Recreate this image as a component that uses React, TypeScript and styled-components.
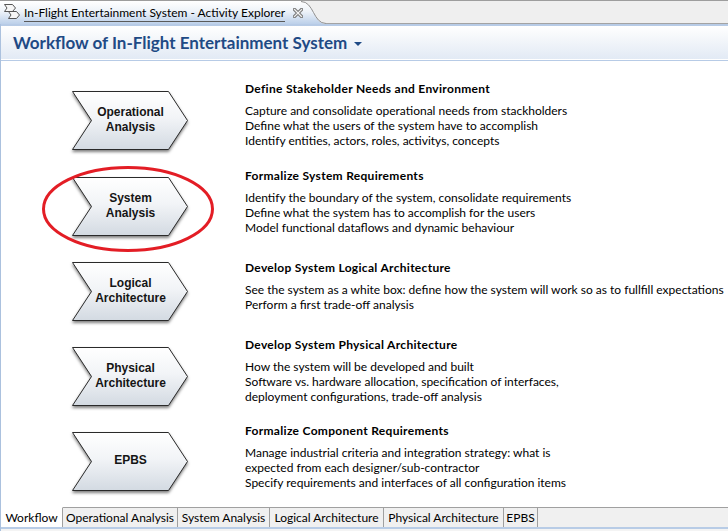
import React from "react";
import styled, { createGlobalStyle } from "styled-components";

const UI = `Lato, "Noto Sans", "DejaVu Sans", sans-serif`;

const Global = createGlobalStyle`
  html, body { margin: 0; padding: 0; background: #fff; }
  body { width: 728px; height: 531px; overflow: hidden; font-family: ${UI}; color: #000; }
`;

const Window = styled.div`
  width: 728px;
  height: 531px;
  display: flex;
  flex-direction: column;
  overflow: hidden;
  background: #fff;
`;

/* ---------- top editor tab bar ---------- */
const TopBar = styled.div`
  flex: none;
  height: 23px;
  display: flex;
  background: #efefef;
  border-top: 1px solid #9d9d9d;
`;

const EditorTab = styled.div`
  position: relative;
  width: 326px;
  display: flex;
  align-items: center;
  padding-left: 4px;
  box-sizing: border-box;
`;

const TabShape = styled.svg`
  position: absolute;
  left: 0;
  top: 0;
`;

const TabIcon = styled.svg`
  position: relative;
  flex: none;
  margin-top: -2px;
`;

const TabTitle = styled.span`
  position: relative;
  margin-left: 4px;
  font-size: 12px;
  line-height: 15px;
  color: #000;
  border-bottom: 1px solid #5a5a5a;
  padding-bottom: 1px;
  margin-top: 2px;
  white-space: nowrap;
`;

const CloseIcon = styled.svg`
  position: relative;
  margin-left: 8px;
  flex: none;
`;

const TopFiller = styled.div`
  flex: 1;
  border-bottom: 1px solid #a3a3a3;
`;

/* ---------- frame ---------- */
const Frame = styled.div`
  flex: 1;
  display: flex;
  flex-direction: column;
  border-left: 1px solid #abc1de;
  min-height: 0;
`;

const Header = styled.div`
  flex: none;
  height: 34px;
  display: flex;
  align-items: center;
  padding-left: 12px;
  border-top: 2px solid #b7cbe6;
  border-bottom: 1px solid #b7cbe6;
  background: linear-gradient(#ffffff 0%, #f3f6fa 40%, #e2eaf5 calc(100% - 1px), #ffffff calc(100% - 1px));
`;

const Title = styled.h1`
  margin: 0;
  font-family: ${UI};
  font-size: 17px;
  line-height: 20px;
  font-weight: 700;
  color: #1f4a85;
`;

const Caret = styled.span`
  margin-left: 7px;
  margin-top: 1px;
  width: 0;
  height: 0;
  border-left: 4px solid transparent;
  border-right: 4px solid transparent;
  border-top: 4px solid #1f4a85;
`;

const Content = styled.div`
  position: relative;
  flex: 1;
  min-height: 0;
  overflow: hidden;
  padding: 30px 0 0 71px;
  background: #fff;
`;

const Row = styled.div<{ $h: number }>`
  display: grid;
  grid-template-columns: 117px 1fr;
  column-gap: 56px;
  height: ${(p) => p.$h}px;
  align-items: start;
`;

const Chevron = styled.div`
  position: relative;
  width: 117px;
  height: 59px;
  display: flex;
  align-items: center;
  justify-content: center;
`;

const ChevronShape = styled.svg`
  position: absolute;
  left: 0;
  top: 0;
  overflow: visible;
  filter: drop-shadow(0 2px 1.5px rgba(0, 0, 0, 0.5));
`;

const ChevronLabel = styled.div`
  position: relative;
  font-family: "Liberation Sans", Arial, sans-serif;
  font-weight: 700;
  font-size: 12px;
  line-height: 15px;
  color: #151515;
  text-align: center;
  padding-bottom: 2px;
`;

const TextBlock = styled.div<{ $off: number }>`
  margin-top: ${(p) => p.$off}px;
  font-size: 12px;
  line-height: 15px;
  white-space: nowrap;
`;

const Heading = styled.div`
  font-weight: 700;
  letter-spacing: 0.3px;
  margin-bottom: 7px;
`;

const Line = styled.div``;

const Highlight = styled.svg`
  position: absolute;
  left: 40px;
  top: 104px;
  pointer-events: none;
`;

/* ---------- bottom tabs ---------- */
const BottomBar = styled.div`
  flex: none;
  height: 20px;
  display: flex;
  background: #f0f0f0;
  border-bottom: 2px solid #b8cce6;
`;

const BottomTab = styled.div<{ $w: number; $active?: boolean }>`
  width: ${(p) => p.$w}px;
  flex: none;
  display: flex;
  align-items: center;
  justify-content: center;
  font-size: 12px;
  color: #000;
  white-space: nowrap;
  box-sizing: content-box;
  background: ${(p) => (p.$active ? "#ffffff" : "#f0f0f0")};
  border-top: 1px solid ${(p) => (p.$active ? "#ffffff" : "#a0a0a0")};
  border-right: 1px solid #a0a0a0;
  height: 19px;
`;

const BottomFiller = styled.div`
  flex: 1;
  border-top: 1px solid #a0a0a0;
`;

const Footer = styled.div`
  flex: none;
  height: 2px;
  background: #f4f4f4;
`;

const rows = [
  {
    label: ["Operational", "Analysis"],
    title: "Define Stakeholder Needs and Environment",
    lines: [
      "Capture and consolidate operational needs from stackholders",
      "Define what the users of the system have to accomplish",
      "Identify entities, actors, roles, activitys, concepts",
    ],
    h: 86,
    off: -10,
  },
  {
    label: ["System", "Analysis"],
    title: "Formalize System Requirements",
    lines: [
      "Identify the boundary of the system, consolidate requirements",
      "Define what the system has to accomplish for the users",
      "Model functional dataflows and dynamic behaviour",
    ],
    h: 85,
    off: -9,
  },
  {
    label: ["Logical", "Architecture"],
    title: "Develop System Logical Architecture",
    lines: [
      "See the system as a white box: define how the system will work so as to fullfill expectations",
      "Perform a first trade-off analysis",
    ],
    h: 85,
    off: -2,
  },
  {
    label: ["Physical", "Architecture"],
    title: "Develop System Physical Architecture",
    lines: [
      "How the system will be developed and built",
      "Software vs. hardware allocation, specification of interfaces,",
      "deployment configurations, trade-off analysis",
    ],
    h: 85,
    off: -10,
  },
  {
    label: ["EPBS"],
    title: "Formalize Component Requirements",
    lines: [
      "Manage industrial criteria and integration strategy: what is",
      "expected from each designer/sub-contractor",
      "Specify requirements and interfaces of all configuration items",
    ],
    h: 75,
    off: -9,
  },
];

const tabs = [
  { name: "Workflow", w: 61, active: true },
  { name: "Operational Analysis", w: 114 },
  { name: "System Analysis", w: 91 },
  { name: "Logical Architecture", w: 113 },
  { name: "Physical Architecture", w: 119 },
  { name: "EPBS", w: 33 },
];

function ChevronBox({ label, id }: { label: string[]; id: number }) {
  const gid = `chev-grad-${id}`;
  return (
    <Chevron>
      <ChevronShape width="117" height="59" viewBox="0 0 117 59">
        <defs>
          <linearGradient id={gid} x1="0" y1="0" x2="0" y2="1">
            <stop offset="0" stopColor="#ffffff" />
            <stop offset="0.45" stopColor="#f2f4f7" />
            <stop offset="1" stopColor="#d3dae2" />
          </linearGradient>
        </defs>
        <polygon
          points="0.5,0.5 96.5,0.5 115.5,29.5 96.5,58.5 0.5,58.5 19.5,29.5"
          fill={`url(#${gid})`}
          stroke="#2a2a2a"
          strokeWidth="1"
          strokeLinejoin="miter"
        />
      </ChevronShape>
      <ChevronLabel>
        {label.map((l) => (
          <div key={l}>{l}</div>
        ))}
      </ChevronLabel>
    </Chevron>
  );
}

export default function App() {
  return (
    <Window>
      <Global />
      <TopBar>
        <EditorTab>
          <TabShape width="326" height="23" viewBox="0 0 326 23">
            <defs>
              <linearGradient id="tabgrad" x1="0" y1="0" x2="0" y2="1">
                <stop offset="0" stopColor="#ffffff" />
                <stop offset="0.45" stopColor="#eef3f9" />
                <stop offset="1" stopColor="#bcd0ea" />
              </linearGradient>
            </defs>
            <path d="M0,0 H301 C314,0 313,23 326,23 H0 Z" fill="url(#tabgrad)" />
            <path d="M301,0.5 C314,0.5 313,22.5 326,22.5" fill="none" stroke="#8f8f8f" strokeWidth="1" />
          </TabShape>
          <TabIcon width="16" height="15" viewBox="0 0 16 15">
            <polygon points="0.5,0.5 8.5,0.5 11.5,4 8.5,7.5 0.5,7.5 3,4" fill="#f6f6f6" stroke="#555" />
            <polygon points="4.5,7.5 12.5,7.5 15.5,11 12.5,14.5 4.5,14.5 7,11" fill="#f6f6f6" stroke="#555" />
          </TabIcon>
          <TabTitle>In-Flight Entertainment System - Activity Explorer</TabTitle>
          <CloseIcon width="10" height="10" viewBox="0 0 10 10">
            <path d="M1.5,1.5 L8.5,8.5 M8.5,1.5 L1.5,8.5" stroke="#7d7d7d" strokeWidth="3.4" strokeLinecap="square" />
            <path d="M1.5,1.5 L8.5,8.5 M8.5,1.5 L1.5,8.5" stroke="#f2f2f2" strokeWidth="1.2" strokeLinecap="square" />
          </CloseIcon>
        </EditorTab>
        <TopFiller />
      </TopBar>
      <Frame>
        <Header>
          <Title>Workflow of In-Flight Entertainment System</Title>
          <Caret />
        </Header>
        <Content>
          {rows.map((r, i) => (
            <Row key={r.title} $h={r.h}>
              <ChevronBox label={r.label} id={i} />
              <TextBlock $off={r.off}>
                <Heading>{r.title}</Heading>
                {r.lines.map((l) => (
                  <Line key={l}>{l}</Line>
                ))}
              </TextBlock>
            </Row>
          ))}
          <Highlight width="174" height="88" viewBox="0 0 174 88">
            <ellipse cx="87" cy="44" rx="84.5" ry="41.5" fill="none" stroke="#e31d25" strokeWidth="3" />
          </Highlight>
        </Content>
        <BottomBar>
          {tabs.map((t) => (
            <BottomTab key={t.name} $w={t.w} $active={t.active}>
              {t.name}
            </BottomTab>
          ))}
          <BottomFiller />
        </BottomBar>
        <Footer />
      </Frame>
    </Window>
  );
}
